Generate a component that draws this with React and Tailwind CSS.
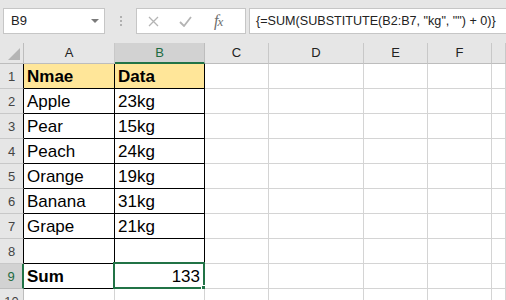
import React from "react"

const cols = ["A", "B", "C", "D", "E", "F", ""]
const widths = ["w-[91px]", "w-[90px]", "w-[64px]", "w-[95px]", "w-[64px]", "w-[64px]", "flex-1"]

const rows = [
  ["Nmae", "Data"],
  ["Apple", "23kg"],
  ["Pear", "15kg"],
  ["Peach", "24kg"],
  ["Orange", "19kg"],
  ["Banana", "31kg"],
  ["Grape", "21kg"],
  ["", ""],
  ["Sum", "133"],
]

const Toolbar = () => (
  <div className="h-[43px] bg-[#e6e6e6] flex items-start pt-[8px] pl-[3px]">
    {/* name box */}
    <div className="w-[102px] h-[26px] bg-white border border-[#c6c6c6] flex items-center justify-between pl-[7px] pr-[5px]">
      <span className="text-[13px] text-[#222]">B9</span>
      <svg width="8" height="5" viewBox="0 0 8 5">
        <path d="M0 0h8L4 4z" fill="#7a7a7a" />
      </svg>
    </div>
    <div className="w-[31px] h-[26px] flex flex-col items-center justify-center gap-[2px]">
      <span className="w-[2px] h-[2px] bg-[#b0b0b0]" />
      <span className="w-[2px] h-[2px] bg-[#b0b0b0]" />
      <span className="w-[2px] h-[2px] bg-[#b0b0b0]" />
    </div>
    {/* cancel / enter / fx */}
    <div className="w-[110px] h-[26px] bg-white border border-[#c6c6c6] flex items-center pl-[11px] gap-[20px]">
      <svg width="11" height="11" viewBox="0 0 11 11">
        <path d="M1 1l9 9M10 1l-9 9" stroke="#b4b4b4" strokeWidth="1.3" />
      </svg>
      <svg width="13" height="11" viewBox="0 0 13 11">
        <path d="M1 6l4 4 7-9" stroke="#b4b4b4" strokeWidth="1.8" fill="none" />
      </svg>
      <span className="ml-[2px] text-[16px] leading-none italic text-[#6e6e6e] font-['Liberation_Serif',serif] tracking-[-1px]">
        f<span className="text-[13px]">x</span>
      </span>
    </div>
    <div className="ml-[3px] flex-1 h-[26px] bg-white border border-r-0 border-[#c6c6c6] flex items-center pl-[6px]">
      <span className="text-[12.6px] text-[#222] whitespace-nowrap">
        {'{=SUM(SUBSTITUTE(B2:B7, "kg", "") + 0)}'}
      </span>
    </div>
  </div>
)

const HeaderRow = () => (
  <div className="flex h-[21px] bg-[#e6e6e6]">
    <div className="w-[24px] border-r border-b border-[#bdbdbd] flex items-end justify-end pr-[3px] pb-[3px]">
      <svg width="12" height="12" viewBox="0 0 12 12">
        <path d="M12 0v12H0z" fill="#b5b5b5" />
      </svg>
    </div>
    {cols.map((c, i) => (
      <div
        key={i}
        className={
          widths[i] +
          " flex items-center justify-center text-[13px] " +
          (c === "B"
            ? "bg-[#d2d2d2] border-r border-r-[#bdbdbd] border-b-2 border-b-[#217346] text-[#1e6b41]"
            : "border-r border-b border-[#c8c8c8] border-b-[#bdbdbd] text-[#222]")
        }
      >
        {c}
      </div>
    ))}
  </div>
)

const Row = ({ n, cells, h = "h-[25px]" }) => {
  const selected = n === 9
  const inTable = n >= 1 && n <= 9
  return (
    <div className={"flex " + h}>
      <div
        className={
          "w-[24px] flex items-end justify-center pb-[2px] text-[13px] " +
          (selected
            ? "bg-[#d2d2d2] border-r-2 border-r-[#217346] border-b border-b-[#bdbdbd] text-[#1e6b41]"
            : "bg-[#e6e6e6] border-b border-[#c8c8c8] border-r " +
              (inTable ? "border-r-black " : "border-r-[#bdbdbd] ") +
              "text-[#444]")
        }
      >
        {n}
      </div>
      {widths.map((w, i) => {
        const black = inTable && i < 2
        const v = cells ? cells[i] : ""
        const bold = n === 1 || (n === 9 && i === 0)
        return (
          <div
            key={i}
            className={
              w +
              " relative flex items-end px-[3px] pb-[1px] text-[17px] leading-[20px] text-black " +
              (black ? "border-r border-b border-black " : "border-r border-b border-[#d4d4d4] ") +
              (n === 1 && i < 2 ? "bg-[#ffe699] " : "bg-white ") +
              (bold ? "font-bold " : "") +
              (n === 9 && i === 1 ? "justify-end pr-[4px]" : "")
            }
          >
            {v}
            {selected && i === 1 && (
              <div className="absolute -top-[2px] -left-[2px] -right-[1px] -bottom-[1px] border-2 border-[#217346]">
                <div className="absolute -right-[4px] -bottom-[4px] w-[6px] h-[6px] bg-[#217346] border border-white" />
              </div>
            )}
          </div>
        )
      })}
    </div>
  )
}

export default function App() {
  return (
    <div className="w-[506px] h-[300px] overflow-hidden bg-white font-['Liberation_Sans',Arial,sans-serif]">
      <Toolbar />
      <HeaderRow />
      {rows.map((r, i) => (
        <Row key={i} n={i + 1} cells={r} />
      ))}
      <Row n={10} cells={null} />
    </div>
  )
}
